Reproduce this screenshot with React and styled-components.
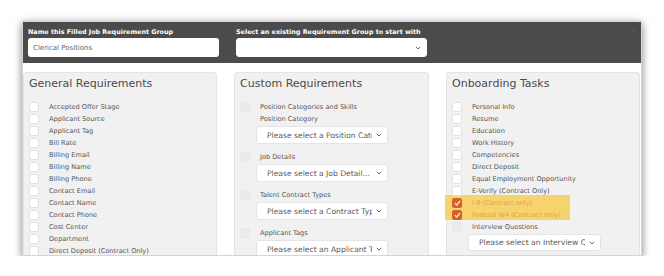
import React from 'react';
import styled, {createGlobalStyle} from 'styled-components';

const GlobalStyle = createGlobalStyle`
    body {
        margin: 0;
        background: #fff;
        font-family: "DejaVu Sans", "Noto Sans", sans-serif;
    }
`;

const Canvas = styled.div`
    padding: 21px 0 0 22px;
`;

const Frame = styled.div`
    width: 618px;
    height: 233px;
    overflow: hidden;
    background: #fff;
    border: 1px solid #d4d4d4;
    box-shadow: 0 2px 8px rgba(0, 0, 0, 0.5);
`;

const Header = styled.div`
    display: grid;
    grid-template-columns: 191px 191px 1fr;
    column-gap: 17px;
    height: 41px;
    box-sizing: border-box;
    padding: 5px 5px 0 5px;
    background: #4b4b4b;
`;

const Field = styled.div`
    display: flex;
    flex-direction: column;
`;

const HeaderLabel = styled.div`
    height: 11px;
    line-height: 11px;
    font-size: 6.4px;
    font-weight: 600;
    color: #fff;
    white-space: nowrap;
`;

const Input = styled.div`
    display: flex;
    align-items: center;
    height: 19px;
    box-sizing: border-box;
    padding: 0 6px 0 5px;
    background: #fff;
    border-radius: 3px;
    font-size: 7px;
    color: #666;
`;

const Close = styled.div`
    justify-self: end;
    font-size: 7px;
    line-height: 8px;
    color: #595959;
`;

const Columns = styled.div`
    display: grid;
    grid-template-columns: 194px 195px 194px;
    column-gap: 17px;
    padding-top: 9px;
`;

const Panel = styled.div`
    height: 200px;
    box-sizing: border-box;
    padding: 3px 5px 0 5px;
    background: #f1f1f1;
    border: 1px solid #e4e4e4;
    border-radius: 3px;
`;

const Title = styled.div`
    height: 16px;
    line-height: 16px;
    font-size: 11px;
    color: #4a4a4a;
    white-space: nowrap;
    margin-bottom: 9px;
`;

const Row = styled.div`
    display: flex;
    align-items: center;
    gap: 10px;
    height: 12px;
`;

const Box = styled.span`
    flex: none;
    display: flex;
    align-items: center;
    justify-content: center;
    width: 10px;
    height: 10px;
    box-sizing: border-box;
    border-radius: 2px;
    background: ${p => p.$state === 'checked' ? '#d8602a' : p.$state === 'disabled' ? '#ebebeb' : '#fff'};
    border: 1px solid ${p => p.$state === 'checked' ? '#d8602a' : p.$state === 'disabled' ? '#e8e8e8' : '#e2e2e2'};
`;

const Label = styled.span`
    font-size: 6.6px;
    color: ${p => p.$tone || '#555'};
    white-space: nowrap;
`;

const SubLabel = styled.div`
    height: 12px;
    line-height: 12px;
    padding-left: 20px;
    font-size: 6.6px;
    color: #555;
    white-space: nowrap;
`;

const Select = styled.div`
    display: flex;
    align-items: center;
    width: ${p => p.$width}px;
    height: ${p => p.$height || 18}px;
    box-sizing: border-box;
    margin: ${p => p.$inset ? '1px 0 0 16px' : '0'};
    padding: 0 5px 0 10px;
    background: #fff;
    border: 1px solid ${p => p.$inset ? '#e4e4e4' : '#fff'};
    border-radius: 3px;
`;

const SelectText = styled.span`
    flex: 1;
    overflow: hidden;
    white-space: nowrap;
    font-size: 7.6px;
    color: #5a5a5a;
`;

const Group = styled.div`
    margin-bottom: 7px;
`;

const Highlight = styled.div`
    width: 125px;
    height: 25px;
    box-sizing: border-box;
    margin: -2px 0 1px -7px;
    padding: 2px 0 0 7px;
    background: #f7d36f;
`;

const Chevron = () => (
    <svg width="6" height="4" viewBox="0 0 6 4" style={{flex: 'none', marginLeft: 4}}>
        <polyline points="0.8,0.8 3,3 5.2,0.8" fill="none" stroke="#555" strokeWidth="0.9" />
    </svg>
);

const Check = () => (
    <svg width="7" height="6" viewBox="0 0 7 6">
        <polyline points="1,3.2 2.8,5 6,1" fill="none" stroke="#fbe6c8" strokeWidth="1.3" />
    </svg>
);

const general = [
    'Accepted Offer Stage', 'Applicant Source', 'Applicant Tag', 'Bill Rate',
    'Billing Email', 'Billing Name', 'Billing Phone', 'Contact Email',
    'Contact Name', 'Contact Phone', 'Cost Center', 'Department',
    'Direct Deposit (Contract Only)',
];

const custom = [
    {label: 'Position Categories and Skills', sub: 'Position Category', placeholder: 'Please select a Position Category'},
    {label: 'Job Details', placeholder: 'Please select a Job Detail...'},
    {label: 'Talent Contract Types', placeholder: 'Please select a Contract Types'},
    {label: 'Applicant Tags', placeholder: 'Please select an Applicant Tags'},
];

const onboarding = [
    'Personal Info', 'Resume', 'Education', 'Work History', 'Competencies',
    'Direct Deposit', 'Equal Employment Opportunity', 'E-Verify (Contract Only)',
];

const CheckRow = ({state, label, tone}) => (
    <Row>
        <Box $state={state}>{state === 'checked' && <Check />}</Box>
        <Label $tone={tone}>{label}</Label>
    </Row>
);

export default function App() {
    return (
        <Canvas>
            <GlobalStyle />
            <Frame>
                <Header>
                    <Field>
                        <HeaderLabel>Name this Filled Job Requirement Group</HeaderLabel>
                        <Input>Clerical Positions</Input>
                    </Field>
                    <Field>
                        <HeaderLabel>Select an existing Requirement Group to start with</HeaderLabel>
                        <Select $width={191} $height={19}>
                            <SelectText />
                            <Chevron />
                        </Select>
                    </Field>
                    <Close>×</Close>
                </Header>

                <Columns>
                    <Panel>
                        <Title>General Requirements</Title>
                        {general.map(item => <CheckRow key={item} label={item} />)}
                    </Panel>

                    <Panel>
                        <Title>Custom Requirements</Title>
                        {custom.map(item => (
                            <Group key={item.label}>
                                <CheckRow state="disabled" label={item.label} />
                                {item.sub && <SubLabel>{item.sub}</SubLabel>}
                                <Select $width={132} $inset>
                                    <SelectText>{item.placeholder}</SelectText>
                                    <Chevron />
                                </Select>
                            </Group>
                        ))}
                    </Panel>

                    <Panel>
                        <Title>Onboarding Tasks</Title>
                        {onboarding.map(item => <CheckRow key={item} label={item} />)}
                        <Highlight>
                            <CheckRow state="checked" label="I-9 (Contract only)" tone="#d4a74e" />
                            <CheckRow state="checked" label="Federal W4 (Contract only)" tone="#d4a74e" />
                        </Highlight>
                        <CheckRow state="disabled" label="Interview Questions" />
                        <Select $width={133} $height={17} $inset>
                            <SelectText>Please select an Interview Questions</SelectText>
                            <Chevron />
                        </Select>
                    </Panel>
                </Columns>
            </Frame>
        </Canvas>
    );
}
